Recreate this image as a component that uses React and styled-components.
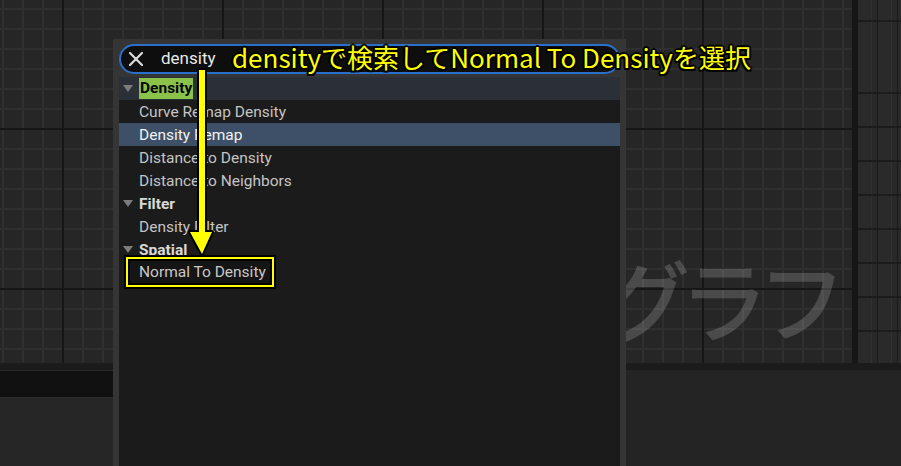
import React from "react";
import styled, { createGlobalStyle } from "styled-components";

const GlobalStyle = createGlobalStyle`
  html, body {
    margin: 0;
    padding: 0;
    background: #242424;
    overflow: hidden;
  }
  * {
    box-sizing: border-box;
  }
`;

const Screen = styled.div`
  position: relative;
  width: 901px;
  height: 466px;
  overflow: hidden;
  background: #242424;
  font-family: Roboto, "Noto Sans", sans-serif;
  display: flex;
  flex-direction: column;
`;

const TopArea = styled.div`
  display: flex;
  height: 363px;
`;

const Canvas = styled.div`
  position: relative;
  flex: 1;
  background-color: #262626;
  background-image: linear-gradient(to right, #161616 2px, transparent 2px),
    linear-gradient(to bottom, #161616 2px, transparent 2px),
    linear-gradient(to right, #2f2f2f 2px, transparent 2px),
    linear-gradient(to bottom, #2f2f2f 2px, transparent 2px);
  background-size: 160px 160px, 160px 160px, 20px 20px, 20px 20px;
  background-position: 62px 0, 0 128px, 2px 0, 0 8px;
`;

const Watermark = styled.div`
  position: absolute;
  right: 16px;
  top: 253px;
  font-family: "Noto Sans CJK JP", sans-serif;
  font-size: 88px;
  font-weight: 500;
  letter-spacing: -10px;
  line-height: 1;
  color: rgba(255, 255, 255, 0.17);
  white-space: nowrap;
`;

const Divider = styled.div`
  width: 6px;
  background: #161616;
`;

const SideStrip = styled.div`
  width: 43px;
  flex-shrink: 0;
  display: flex;
  gap: 1px;
  background: #1c1c1c;
`;

const StripColumn = styled.div`
  width: 19px;
  flex-shrink: 0;
  display: flex;
  flex-direction: column;
  gap: 2px;
`;

const StripTile = styled.div`
  height: ${(p) => p.$h}px;
  flex-shrink: 0;
  background: linear-gradient(to right, #2a2a2a 70%, #313131 70%, #313131 76%, #282828 76%);
`;

const SplitBar = styled.div`
  height: 7px;
  background: #1b1b1b;
`;

const BottomRow = styled.div`
  flex: 1;
  display: flex;
`;

const LeftDock = styled.div`
  width: 120px;
  display: flex;
  flex-direction: column;
  border-top: 1px solid #2a2a2a;
`;

const DockTabs = styled.div`
  height: 27px;
  background: #111111;
  border-bottom: 1px solid #2c2c2c;
`;

const DockBody = styled.div`
  flex: 1;
  background: #262626;
`;

const RightDock = styled.div`
  flex: 1;
  background: #242424;
`;

const Popup = styled.div`
  position: absolute;
  left: 113px;
  top: 39px;
  width: 513px;
  bottom: 0;
  background: #353535;
  padding: 5px 6px 0 6px;
  display: flex;
  flex-direction: column;
  gap: 3px;
`;

const SearchBox = styled.div`
  height: 30px;
  border: 2px solid #2a6fc9;
  border-radius: 15px;
  background: #0e0e0e;
  display: flex;
  align-items: center;
  padding-left: 7px;
  gap: 17px;
`;

const SearchText = styled.span`
  color: #e8e8e8;
  font-size: 17px;
  margin-top: -2px;
`;

const List = styled.div`
  flex: 1;
  background: #1b1b1b;
`;

const Row = styled.div`
  height: 23px;
  display: flex;
  align-items: center;
  padding-left: ${(p) => (p.$header ? 4 : 20)}px;
  font-size: 15.5px;
  font-weight: ${(p) => (p.$header ? 700 : 400)};
  color: ${(p) => (p.$selected ? "#f2f2f2" : p.$header ? "#d8d8d8" : "#c4c4c4")};
  background: ${(p) => (p.$selected ? "#3d5068" : p.$hover ? "#2b3038" : "transparent")};
  white-space: nowrap;
`;

const Caret = styled.span`
  width: 0;
  height: 0;
  border-left: 5px solid transparent;
  border-right: 5px solid transparent;
  border-top: 7px solid #7c7c7c;
  margin-right: 6px;
`;

const Match = styled.span`
  background: #8bc34a;
  color: #050505;
  padding: 1px 1px;
  line-height: 19px;
`;

const HighlightBox = styled.div`
  position: absolute;
  left: 126px;
  top: 257px;
  width: 148px;
  height: 30px;
  border: 2px solid #ffff00;
  box-shadow: 0 0 0 2px #000, inset 0 0 0 2px #000;
  background: #151515;
  display: flex;
  align-items: center;
  padding-left: 11px;
  color: #c8c8c8;
  font-size: 15.5px;
  white-space: nowrap;
`;

const Arrow = styled.svg`
  position: absolute;
  left: 184px;
  top: 66px;
`;

const Callout = styled.div`
  position: absolute;
  left: 232px;
  top: 40px;
  font-family: "Noto Sans CJK JP", sans-serif;
  font-size: 26px;
  line-height: 34px;
  color: #ffff00;
  white-space: nowrap;
  text-shadow: -2px 0 #000, 2px 0 #000, 0 -2px #000, 0 2px #000, -1.5px -1.5px #000,
    1.5px -1.5px #000, -1.5px 1.5px #000, 1.5px 1.5px #000;
`;

const stripRows = [20, 70, 32, 32, 32, 32, 32, 32, 32, 32];

const items = [
  { label: <Match>Density</Match>, header: true, hover: true },
  { label: "Curve Remap Density" },
  { label: "Density Remap", selected: true },
  { label: "Distance to Density" },
  { label: "Distance to Neighbors" },
  { label: "Filter", header: true },
  { label: "Density Filter" },
  { label: "Spatial", header: true },
  { label: "" },
];

const CloseIcon = () => (
  <svg width="16" height="16" viewBox="0 0 16 16">
    <path d="M2 2 L14 14 M14 2 L2 14" stroke="#dcdcdc" strokeWidth="2.2" strokeLinecap="round" />
  </svg>
);

export default function App() {
  return (
    <>
      <GlobalStyle />
      <Screen>
        <TopArea>
          <Canvas>
            <Watermark>PCGグラフ</Watermark>
          </Canvas>
          <Divider />
          <SideStrip>
            {[0, 1, 2].map((c) => (
              <StripColumn key={c}>
                {stripRows.map((h, i) => (
                  <StripTile key={i} $h={h} />
                ))}
              </StripColumn>
            ))}
          </SideStrip>
        </TopArea>
        <SplitBar />
        <BottomRow>
          <LeftDock>
            <DockTabs />
            <DockBody />
          </LeftDock>
          <RightDock />
        </BottomRow>

        <Popup>
          <SearchBox>
            <CloseIcon />
            <SearchText>density</SearchText>
          </SearchBox>
          <List>
            {items.map((it, i) => (
              <Row key={i} $header={it.header} $selected={it.selected} $hover={it.hover}>
                {it.header && <Caret />}
                {it.label}
              </Row>
            ))}
          </List>
        </Popup>

        <HighlightBox>Normal To Density</HighlightBox>
        <Arrow width="34" height="194" viewBox="0 0 34 194">
          <path
            d="M15 4 H21 V166 H28 L18 188 L6 166 H15 Z"
            fill="#ffff00"
            stroke="#000"
            strokeWidth="4"
            strokeLinejoin="round"
            paintOrder="stroke"
          />
        </Arrow>
        <Callout>densityで検索してNormal To Densityを選択</Callout>
      </Screen>
    </>
  );
}
